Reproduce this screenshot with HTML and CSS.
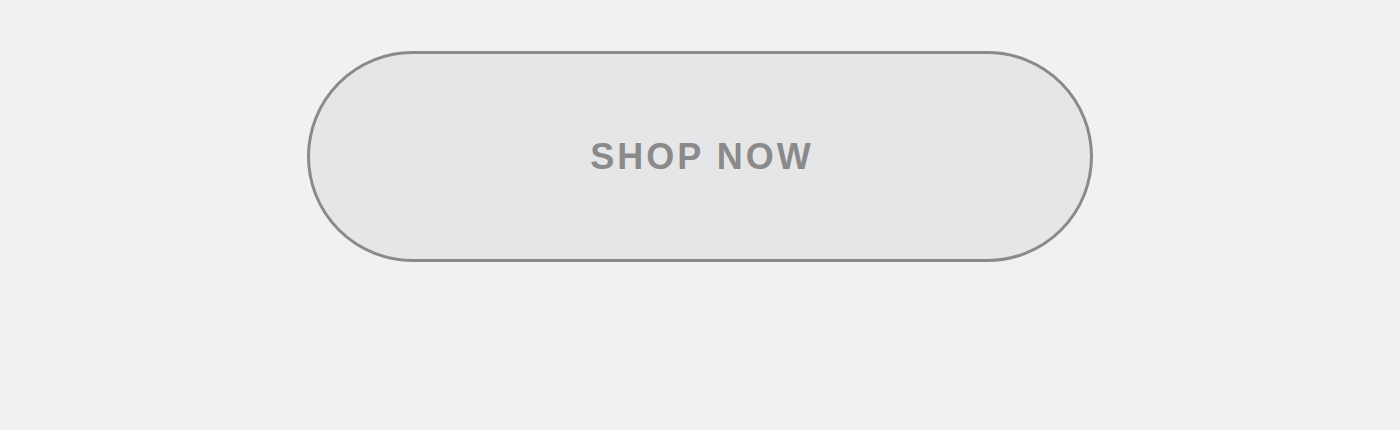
FILE: index.html
```html
<!DOCTYPE html>
<html lang="en">
  <head>
    <meta charset="UTF-8" />
    <meta name="viewport" content="width=device-width, initial-scale=1.0" />
    <title>Shop Now</title>
    <link rel="stylesheet" href="styles.css">
  </head>
  <body>
    <div class="page">
      <button type="button" class="shop-button">Shop now</button>
    </div>
  </body>
</html>
```

FILE: styles.css
```css
body {
  margin: 0;
  background-color: #f0f1f3;
  font-family: "Liberation Sans", Arial, sans-serif;
}

/* centers the button near the top */
.page {
  display: flex;
  justify-content: center;
  padding-top: 51px;
}

.shop-button {
  width: 786px;
  height: 211px;
  padding: 0 0 0 4px;
  background-color: #e5e6e8;
  border: 3px solid #8a8a8a;
  border-radius: 106px;
  color: #8a8a8a;
  font-family: inherit;
  font-size: 36px;
  font-weight: bold;
  letter-spacing: 3px;
  text-transform: uppercase;
  cursor: pointer;
}
```
